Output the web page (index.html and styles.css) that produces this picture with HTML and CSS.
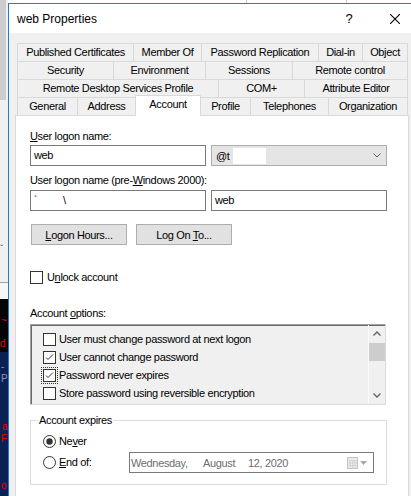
FILE: index.html
```html
<!DOCTYPE html>
<html>
<head>
<meta charset="utf-8">
<link rel="stylesheet" href="styles.css">
</head>
<body>
<div class="screen">
  <div class="bgleft">
    <div class="bl-a"></div>
    <div class="bl-b"><span class="bl-chev">&#711;</span></div>
    <div class="bl-line"></div>
    <div class="bl-c"></div>
    <div class="bl-d"><span class="bl-red1">~</span><span class="bl-red2">d</span></div>
    <div class="bl-e"><span class="bl-gray1">-</span><span class="bl-gray2">P</span><span class="bl-red3">a</span><span class="bl-red4">F</span><span class="bl-red5">o</span></div>
  </div>
  <div class="main">
    <div class="topstrip"><div class="ts1"></div><div class="ts2"></div></div>
    <div class="dialog">
      <div class="titlebar">
        <span class="title">web Properties</span>
        <span class="tb-btn help">?</span>
        <span class="tb-btn close"><svg width="10" height="10" viewBox="0 0 10 10"><path d="M0 0L10 10M10 0L0 10" stroke="#000" stroke-width="1.1" fill="none"/></svg></span>
      </div>
      <div class="tabs">
        <div class="tabrow row1">
          <div class="tab">Published Certificates</div>
          <div class="tab">Member Of</div>
          <div class="tab">Password Replication</div>
          <div class="tab">Dial-in</div>
          <div class="tab">Object</div>
        </div>
        <div class="tabrow row2">
          <div class="tab">Security</div>
          <div class="tab">Environment</div>
          <div class="tab">Sessions</div>
          <div class="tab">Remote control</div>
        </div>
        <div class="tabrow row3">
          <div class="tab">Remote Desktop Services Profile</div>
          <div class="tab">COM+</div>
          <div class="tab">Attribute Editor</div>
        </div>
        <div class="tabrow row4">
          <div class="tab">General</div>
          <div class="tab">Address</div>
          <div class="tab sel">Account</div>
          <div class="tab">Profile</div>
          <div class="tab">Telephones</div>
          <div class="tab">Organization</div>
        </div>
      </div>
      <div class="panel">
        <div class="lbl"><u>U</u>ser logon name:</div>
        <div class="row row-a">
          <div class="field">web</div>
          <div class="combo"><span>@t</span><span class="redact"></span><svg class="chev" width="8" height="5" viewBox="0 0 8 5"><polyline points="0.5,0.5 4,4 7.5,0.5" fill="none" stroke="#606060" stroke-width="1"/></svg></div>
        </div>
        <div class="lbl lbl2">User logon name (pre-<u>W</u>indows 2000):</div>
        <div class="row row-b">
          <div class="field"><span class="tick">`</span><span class="bslash">\</span></div>
          <div class="field">web</div>
        </div>
        <div class="btnrow">
          <div class="btn"><span><u>L</u>ogon Hours...</span></div>
          <div class="btn"><span>Log On <u>T</u>o...</span></div>
        </div>
        <div class="chkrow">
          <span class="cb"></span><span class="cb-label">U<u>n</u>lock account</span>
        </div>
        <div class="lbl lbl3">Account <u>o</u>ptions:</div>
        <div class="listbox">
          <div class="items">
            <div class="item"><span class="cb"></span><span class="item-label">User must change password at next logon</span></div>
            <div class="item"><span class="cb"><svg width="11" height="11" viewBox="0 0 11 11"><polyline points="2,5.5 4,7.5 9,2.5" fill="none" stroke="#333" stroke-width="1"/></svg></span><span class="item-label">User cannot change password</span></div>
            <div class="item"><span class="cb focus"><svg width="11" height="11" viewBox="0 0 11 11"><polyline points="2,5.5 4,7.5 9,2.5" fill="none" stroke="#333" stroke-width="1"/></svg></span><span class="item-label">Password never expires</span></div>
            <div class="item"><span class="cb"></span><span class="item-label">Store password using reversible encryption</span></div>
          </div>
          <div class="sb">
            <div class="sb-btn"><svg width="8" height="5" viewBox="0 0 8 5"><polyline points="0.5,4.5 4,1 7.5,4.5" fill="none" stroke="#606060" stroke-width="1.3"/></svg></div>
            <div class="sb-thumb"></div>
            <div class="sb-track"></div>
            <div class="sb-btn"><svg width="8" height="5" viewBox="0 0 8 5"><polyline points="0.5,0.5 4,4 7.5,0.5" fill="none" stroke="#606060" stroke-width="1.3"/></svg></div>
          </div>
        </div>
        <fieldset class="group">
          <legend>Account expires</legend>
          <div class="radrow r-never">
            <svg class="radio" width="13" height="13" viewBox="0 0 13 13"><circle cx="6.5" cy="6.5" r="6" fill="#fff" stroke="#333"/><circle cx="6.5" cy="6.5" r="3.2" fill="#333"/></svg>
            <span class="rad-label">Ne<u>v</u>er</span>
          </div>
          <div class="radrow r-end">
            <svg class="radio" width="13" height="13" viewBox="0 0 13 13"><circle cx="6.5" cy="6.5" r="6" fill="#fff" stroke="#333"/></svg>
            <span class="rad-label end-label"><u>E</u>nd of:</span>
            <div class="dp">
              <span class="seg seg1">Wednesday,</span>
              <span class="seg seg2">August</span>
              <span class="seg">12, 2020</span>
              <svg class="cal" width="11" height="12" viewBox="0 0 11 12"><rect x="0.5" y="0.5" width="10" height="11" fill="#ececec" stroke="#c4c4c4"/><path d="M0.5 3.5H10.5M0.5 6H10.5M0.5 8.5H10.5M3 3.5V11.5M5.5 3.5V11.5M8 3.5V11.5" stroke="#d0d0d0" stroke-width="0.8"/></svg>
              <svg class="tri" width="7" height="4" viewBox="0 0 7 4"><polygon points="0,0 7,0 3.5,4" fill="#a8a8a8"/></svg>
            </div>
          </div>
        </fieldset>
      </div>
    </div>
  </div>
</div>
</body>
</html>
```

FILE: styles.css
```css
* { box-sizing: border-box; }
html, body { margin: 0; padding: 0; }
body {
  width: 411px;
  height: 496px;
  overflow: hidden;
  background: #fff;
  font-family: "Liberation Sans", Arial, sans-serif;
  font-size: 11px;
  letter-spacing: -0.35px;
  color: #000;
}
u { text-decoration: underline; text-underline-offset: 1px; }
.screen { display: flex; height: 496px; }

/* background window strip on the left */
.bgleft { width: 8px; flex: none; display: flex; flex-direction: column; overflow: hidden; }
.bl-a { height: 100px; background: #cdcdcd; border-right: 2px solid #f0f0f0; }
.bl-b { height: 182px; background: #f0f0f0; display: flex; flex-direction: column; }
.bl-chev { margin-top: 146px; font-size: 10px; color: #555; line-height: 8px; }
.bl-line { height: 1px; background: #a0a0a0; }
.bl-c { height: 16px; background: #f6f6f6; }
.bl-d { height: 53px; background: #050505; display: flex; flex-direction: column; color: #e00; font-size: 10px; letter-spacing: 0; white-space: nowrap; }
.bl-red1 { line-height: 10px; margin-top: 17px; margin-left: 1px; }
.bl-red2 { line-height: 12px; margin-top: 12px; margin-left: 0; }
.bl-e { flex: 1; background: #0b2156; display: flex; flex-direction: column; white-space: nowrap; font-size: 10px; letter-spacing: 0; }
.bl-gray1 { color: #8d96aa; margin-top: 9px; line-height: 12px; margin-left: 1px; }
.bl-gray2 { color: #8d96aa; line-height: 12px; margin-left: 1px; }
.bl-red3 { color: #e00; margin-top: 36px; line-height: 12px; margin-left: 2px; }
.bl-red4 { color: #e00; line-height: 12px; margin-left: 1px; }
.bl-red5 { color: #e00; margin-top: 36px; line-height: 10px; margin-left: 1px; }

.main { flex: none; width: 410px; display: flex; flex-direction: column; }
.topstrip { height: 3px; display: flex; background: #fff; flex: none; }
.ts1 { width: 239px; border-right: 1px solid #c8c8c8; }
.ts2 { width: 100px; border-right: 1px solid #c8c8c8; }

.dialog {
  flex: 1;
  border-top: 1px solid #1a7fd4;
  border-left: 1px solid #1a7fd4;
  background: #f0f0f0;
}
.titlebar {
  height: 29px;
  background: #fff;
  display: flex;
  align-items: center;
  padding-left: 8px;
  font-size: 12px;
  letter-spacing: 0;
}
.title { flex: 1; }
.tb-btn { width: 46px; height: 29px; display: flex; align-items: center; justify-content: center; }
.help { font-size: 13px; }

/* tabs */
.tabs { margin: 10px 0 0 8px; width: 391px; }
.tabrow { display: grid; height: 18px; }
.row1 { grid-template-columns: 116px 68px 117px 44px 46px; }
.row2 { grid-template-columns: 96px 92px 87px 116px; }
.row3 { grid-template-columns: 201px 86px 104px; }
.row4 { grid-template-columns: 60px 58px 65px 50px 78px 80px; }
.tab {
  border-left: 1px solid #d9d9d9;
  border-top: 1px solid #d9d9d9;
  text-align: center;
  line-height: 17px;
  white-space: nowrap;
  background: #f0f0f0;
}
.tab:last-child { border-right: 1px solid #d9d9d9; }
.tab.sel {
  background: #fff;
  margin-top: -2px;
  margin-bottom: -1px;
  margin-right: -1px;
  border-right: 1px solid #d9d9d9;
  position: relative;
  z-index: 1;
  line-height: 17px;
}

/* panel */
.panel {
  margin-left: 6px;
  width: 394px;
  height: 400px;
  border: 1px solid #d9d9d9;
  background: #fff;
  padding: 13px 0 0 14px;
}
.lbl { line-height: 15px; height: 15px; white-space: nowrap; }
.lbl2 { margin-top: 7px; }
.lbl3 { margin-top: 22px; }
.row { display: flex; gap: 5px; }
.row-a { margin-top: 1px; }
.row-b { margin-top: 2px; }
.field {
  width: 176px;
  height: 21px;
  border: 1px solid #7a7a7a;
  background: #fff;
  padding-left: 3px;
  line-height: 19px;
  white-space: pre;
}
.tick { font-size: 10px; }
.bslash { margin-left: 26px; }
.combo {
  width: 176px;
  height: 21px;
  border: 1px solid #adadad;
  background: #e5e5e5;
  display: flex;
  align-items: center;
  padding-left: 4px;
}
.redact { width: 33px; height: 16px; background: #fff; margin-left: 3px; }
.chev { margin-left: auto; margin-right: 5px; }

.btnrow { display: flex; gap: 9px; margin-top: 13px; padding-left: 1px; }
.btn {
  width: 96px;
  height: 21px;
  background: #e1e1e1;
  border: 1px solid #adadad;
  display: flex;
  align-items: center;
  justify-content: center;
}

.cb {
  width: 13px;
  height: 13px;
  border: 1px solid #333;
  background: #fff;
  flex: none;
  display: block;
}
.cb svg { display: block; }
.cb.focus { outline: 1px dotted #333; outline-offset: 1px; }
.chkrow { display: flex; align-items: center; margin-top: 26px; height: 13px; }
.cb-label { margin-left: 4px; line-height: 13px; }

.listbox {
  margin-top: 3px;
  width: 356px;
  height: 81px;
  border: 1px solid;
  border-color: #a0a0a0 #dcdcdc #dcdcdc #a0a0a0;
  box-shadow: inset 1px 1px 0 #696969;
  background: #f0f0f0;
  display: flex;
}
.items { flex: 1; padding: 5px 0 0 12px; }
.item { height: 18px; display: flex; align-items: center; }
.item-label { margin-left: 3px; white-space: nowrap; }
.sb { width: 17px; display: flex; flex-direction: column; border-left: 1px solid #fbfbfb; }
.sb-btn { height: 17px; display: flex; align-items: center; justify-content: center; }
.sb-btn svg { display: block; }
.sb-thumb { height: 18px; background: #cdcdcd; margin-top: 1px; }
.sb-track { flex: 1; }

.group {
  margin: 8px 0 0 0;
  width: 357px;
  height: 72px;
  border: 1px solid #dcdcdc;
  padding: 0 0 0 12px;
}
.group legend { margin-left: -5px; padding: 0 1px; line-height: 15px; }
.radrow { display: flex; align-items: center; }
.r-never { height: 13px; margin-top: 7px; }
.r-end { height: 21px; margin-top: 4px; }
.radio { display: block; flex: none; }
.rad-label { margin-left: 3px; line-height: 13px; }
.end-label { width: 70px; }
.dp {
  width: 245px;
  height: 21px;
  border: 1px solid #7a7a7a;
  background: #fff;
  display: flex;
  align-items: center;
  padding: 0 6px 0 1px;
  color: #6d6d6d;
}
.seg1 { width: 72px; }
.seg2 { width: 45px; }
.cal { margin-left: auto; display: block; }
.tri { margin-left: 2px; display: block; }
```
